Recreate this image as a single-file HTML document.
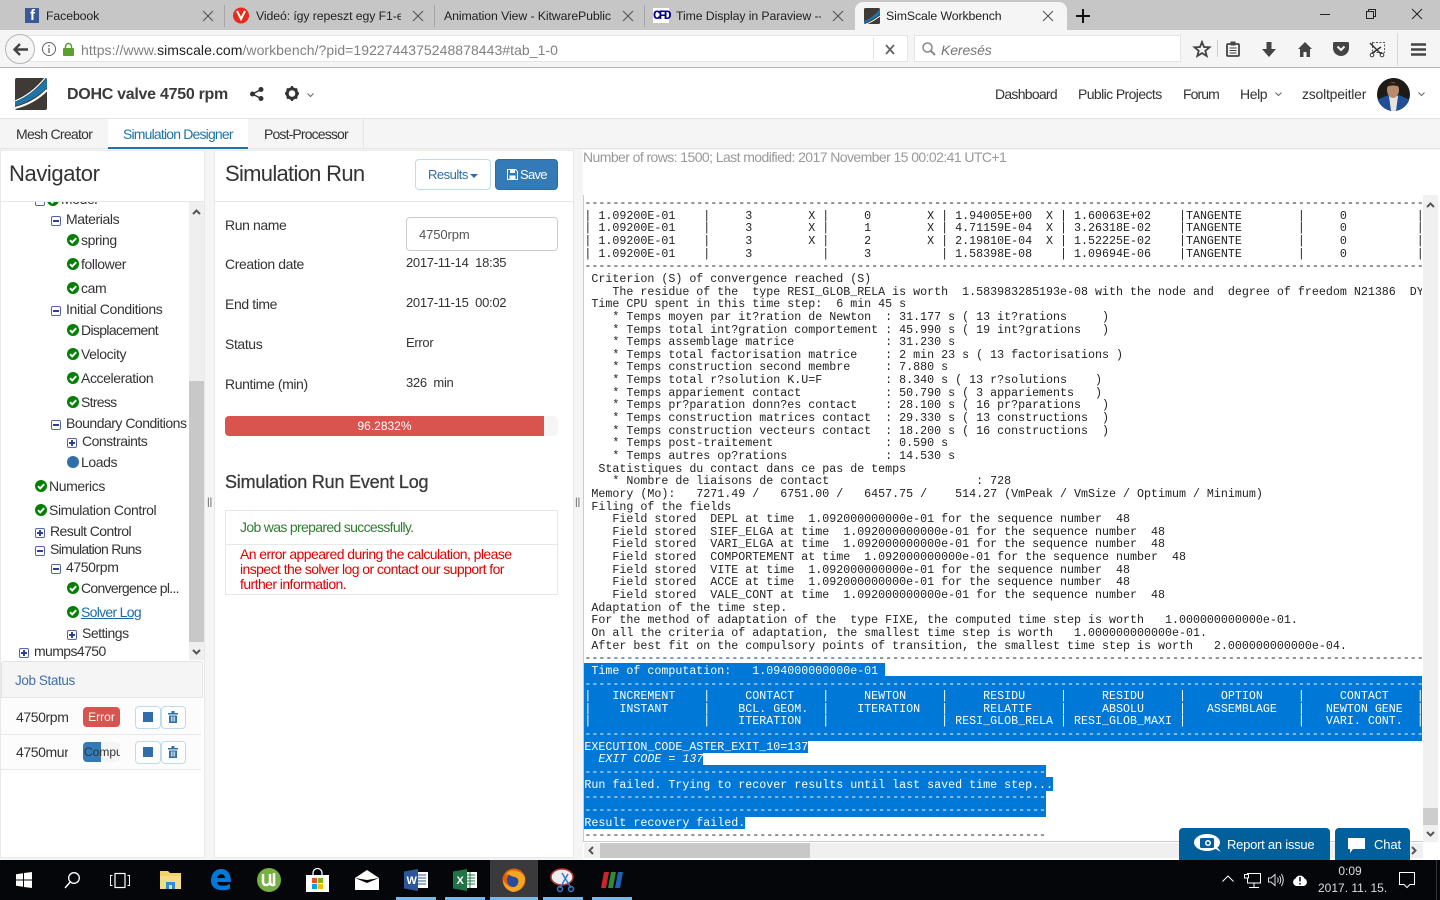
<!DOCTYPE html>
<html><head><meta charset="utf-8"><title>SimScale Workbench</title>
<style>
html,body{margin:0;padding:0;width:1440px;height:900px;overflow:hidden;background:#f5f5f5}
body{position:relative;font-family:"Liberation Sans",sans-serif;font-size:14px;color:#333;letter-spacing:-.4px}
.a{position:absolute;white-space:nowrap;line-height:20px}
.b{position:absolute}
svg{position:absolute;overflow:visible}
.tab{font-size:12.3px;color:#222;letter-spacing:-.1px}
.t{color:#333}
.v{font-size:13px;letter-spacing:-.3px;color:#333}
.bx{position:absolute;width:8px;height:8px;border:1px solid #5563a8;border-radius:2px;background:#fff}
.bx:before{content:"";position:absolute;left:1px;top:3px;width:6px;height:2px;background:#2f3f9a}
.bx.p:after{content:"";position:absolute;left:3px;top:1px;width:2px;height:6px;background:#2f3f9a}
pre{position:absolute;left:.4px;top:2.17px;margin:0;font-family:"Liberation Mono",monospace;font-size:11.67px;line-height:12.64px;letter-spacing:0;color:#222}
pre span{color:#fff}
.sel{position:absolute;left:0;background:#0078d7}
.ul{position:absolute;top:897px;height:3px;background:#76b9ed}
</style></head><body>

<svg width="0" height="0" style="position:absolute"><defs>
<g id="ck"><circle cx="6" cy="6" r="6" fill="#008000"/><path d="M3 6.2 5.2 8.4 9.2 4.2" fill="none" stroke="#fff" stroke-width="2"/></g>
<g id="xx"><path d="M0 0 10 10M10 0 0 10" stroke="#555" stroke-width="1.1" fill="none"/></g>
<g id="trash"><path d="M0 2h10v1.5H0zM3.5 0h3v2h-3zM1 4.5h8V12H1z" fill="#2f6ea8"/><path d="M3.3 5.5v5M5 5.5v5M6.7 5.5v5" stroke="#fff" stroke-width=".8"/></g>
</defs></svg>

<!-- tab strip -->
<div class="b" style="left:0;top:0;width:1440px;height:30px;background:#c6c6c6"></div>
<div class="b" style="left:224px;top:5px;width:1px;height:22px;background:#a5a5a5"></div>
<div class="b" style="left:434px;top:5px;width:1px;height:22px;background:#a5a5a5"></div>
<div class="b" style="left:644px;top:5px;width:1px;height:22px;background:#a5a5a5"></div>
<div class="b" style="left:855px;top:2px;width:212px;height:28px;background:#f5f5f5;border-radius:8px 8px 0 0"></div>

<div class="b" style="left:25px;top:8px;width:14px;height:15px;background:#3b5998"></div>
<div class="a" style="left:30px;top:6px;color:#fff;font:bold 15px/20px 'Liberation Sans',sans-serif">f</div>
<div class="a tab" style="left:46px;top:6px">Facebook</div>
<svg style="left:203px;top:11px" width="10" height="10"><use href="#xx"/></svg>

<svg style="left:233px;top:7px" width="16" height="17"><circle cx="8" cy="8.5" r="8" fill="#e8291c"/><path d="M4 4 8 12 12 4" fill="none" stroke="#fff" stroke-width="2"/></svg>
<div class="a tab" style="left:256px;top:6px;width:145px;overflow:hidden">Videó: így repeszt egy F1-es a</div>
<svg style="left:413px;top:11px" width="10" height="10"><use href="#xx"/></svg>

<div class="a tab" style="left:444px;top:6px">Animation View - KitwarePublic</div>
<svg style="left:623px;top:11px" width="10" height="10"><use href="#xx"/></svg>

<div class="b" style="left:653px;top:8px;width:16px;height:15px;background:#fff"></div>
<div class="a" style="left:653px;top:6px;font:bold 13px/20px 'Liberation Mono',monospace;color:#00008b;letter-spacing:-2.400px">CFD</div>
<div class="a tab" style="left:676px;top:6px;width:145px;overflow:hidden">Time Display in Paraview -- C</div>
<svg style="left:833px;top:11px" width="10" height="10"><use href="#xx"/></svg>

<svg style="left:864px;top:8px" width="16" height="16"><rect width="16" height="16" rx="1.5" fill="#3f3a36"/><path d="M0 13C6 11 11 7 16 1V6C11 10 6 13 0 15z" fill="#1b75aa"/><path d="M2 16C8 14 12 11 16 8" stroke="#fff" fill="none"/></svg>
<div class="a tab" style="left:886px;top:6px">SimScale Workbench</div>
<svg style="left:1043px;top:11px" width="10" height="10"><use href="#xx"/></svg>
<svg style="left:1076px;top:9px" width="14" height="14"><path d="M7 0V14M0 7H14" stroke="#111" stroke-width="2"/></svg>

<svg style="left:1320px;top:14px" width="10" height="1"><path d="M0 .5H10" stroke="#222"/></svg>
<svg style="left:1366px;top:9px" width="10" height="10"><path d="M2.5 2.5V.5H9.5V7.5H7.5M.5 2.5H7.5V9.5H.5z" fill="none" stroke="#222"/></svg>
<svg style="left:1412px;top:9px" width="10" height="10"><path d="M0 0 10 10M10 0 0 10" stroke="#222" stroke-width="1"/></svg>

<!-- toolbar -->
<div class="b" style="left:0;top:30px;width:1440px;height:38px;background:#f5f5f5;border-bottom:1px solid #b5b5b5;box-sizing:border-box"></div>
<div class="b" style="left:20px;top:35px;width:888px;height:27px;background:#fff;border:1px solid #e4e4e4;box-sizing:border-box"></div>
<div class="b" style="left:5px;top:34px;width:30px;height:30px;border-radius:50%;background:#f5f5f5;border:1px solid #b5b5b5;box-sizing:border-box"></div>
<svg style="left:13px;top:43px" width="15" height="13"><path d="M7 1 1.5 6.5 7 12M2 6.500H15" fill="none" stroke="#444" stroke-width="2.400"/></svg>
<svg style="left:42px;top:42px" width="14" height="14"><circle cx="7" cy="7" r="6.500" fill="none" stroke="#666"/><path d="M7 6V11M7 3V4.800" stroke="#666" stroke-width="1.300"/></svg>
<svg style="left:63px;top:43px" width="11" height="13"><rect y="5" width="11" height="8" rx="1" fill="#5aa02c"/><path d="M2.500 6V3.500a3 3 0 0 1 6 0V6" fill="none" stroke="#5aa02c" stroke-width="1.500"/></svg>
<div class="a" style="left:81px;top:40px;color:#808080;letter-spacing:.05px">https://www.<span style="color:#222">simscale.com</span>/workbench/?pid=1922744375248878443#tab_1-0</div>
<div class="b" style="left:873px;top:38px;width:1px;height:21px;background:#e2e2e2"></div>
<svg style="left:886px;top:45px" width="8" height="9"><path d="M0 0 8 9M8 0 0 9" stroke="#666" stroke-width="1.800"/></svg>
<div class="b" style="left:914px;top:35px;width:267px;height:27px;background:#fff;border:1px solid #e4e4e4;box-sizing:border-box"></div>
<svg style="left:922px;top:42px" width="14" height="14"><circle cx="5.500" cy="5.500" r="4.500" fill="none" stroke="#888" stroke-width="1.500"/><path d="M9 9 13 13" stroke="#888" stroke-width="2"/></svg>
<div class="a" style="left:941px;top:40px;font-style:italic;color:#777;letter-spacing:-.1px">Keresés</div>

<svg style="left:1194px;top:41px" width="16" height="16"><path d="M8 1 10 6 15.500 6.300 11.300 9.800 12.700 15 8 12.100 3.300 15 4.700 9.800 .5 6.300 6 6z" fill="none" stroke="#444" stroke-width="1.800"/></svg>
<div class="b" style="left:1217px;top:40px;width:1px;height:17px;background:#ccc"></div>
<svg style="left:1226px;top:42px" width="14" height="15"><rect x="1" y="2" width="12" height="12" rx="1" fill="none" stroke="#444" stroke-width="1.800"/><path d="M5 0H9V3H5zM3.500 6H10.500M3.500 8.500H10.500M3.500 11H10.500" fill="#444" stroke="#444"/></svg>
<svg style="left:1262px;top:42px" width="14" height="15"><path d="M4.500 0H9.500V7H14L7 15 0 7H4.500z" fill="#444"/></svg>
<svg style="left:1298px;top:42px" width="14" height="15"><path d="M7 0 14 7H12V15H8.500V10H5.500V15H2V7H0z" fill="#444"/></svg>
<svg style="left:1333px;top:42px" width="16" height="14"><path d="M1.500 0H14.500Q16 0 16 1.500V6A8 8 0 0 1 0 6V1.500Q0 0 1.500 0z" fill="#444"/><path d="M4.500 4.500 8 8 11.500 4.500" fill="none" stroke="#f5f5f5" stroke-width="2"/></svg>
<svg style="left:1369px;top:42px" width="16" height="15"><rect x="3.500" y=".5" width="12" height="10" fill="none" stroke="#555" stroke-dasharray="2 1.500"/><path d="M1 1 12 12M12 5 2 12" stroke="#333" stroke-width="1.500"/><circle cx="3" cy="13" r="1.800" fill="#fff" stroke="#333"/><circle cx="13" cy="13" r="1.800" fill="#fff" stroke="#333"/></svg>
<div class="b" style="left:1397px;top:33px;width:1px;height:33px;background:#d8d8d8"></div>
<svg style="left:1411px;top:43px" width="15" height="13"><path d="M0 1.500H15M0 6.500H15M0 11.500H15" stroke="#444" stroke-width="2.600"/></svg>

<!-- app header -->
<div class="b" style="left:0;top:68px;width:1440px;height:51px;background:#fff;border-bottom:1px solid #e4e4e4;box-sizing:border-box"></div>
<svg style="left:15px;top:78px" width="32" height="32"><rect width="32" height="32" rx="2" fill="#3f3a36"/><path d="M0 24C10 20 22 12 32 0V10C22 19 11 25 0 28z" fill="#1b75aa"/><path d="M0 30C12 27 22 22 32 12" fill="none" stroke="#fff" stroke-width="2"/><path d="M0 23C10 19 21 11 30 0" fill="none" stroke="#fff" stroke-width="1.200"/></svg>
<div class="a" style="left:67px;top:85px;font-size:16px;font-weight:bold;color:#3a3a3a;letter-spacing:-.28px">DOHC valve 4750 rpm</div>
<svg style="left:250px;top:87px" width="14" height="14"><circle cx="2.500" cy="7" r="2.500" fill="#333"/><circle cx="11" cy="2.500" r="2.500" fill="#333"/><circle cx="11" cy="11.500" r="2.500" fill="#333"/><path d="M2.500 7 11 2.500M2.500 7 11 11.500" stroke="#333" stroke-width="1.500"/></svg>
<svg style="left:285px;top:86px" width="14" height="15"><circle cx="7" cy="7.500" r="4.800" fill="none" stroke="#333" stroke-width="3"/><path d="M7 0V3M7 12V15M0 7.500H3M11 7.500H14M2 2.500 4 4.500M10 10.500 12 12.500M12 2.500 10 4.500M4 10.500 2 12.500" stroke="#333" stroke-width="2.200"/></svg>
<svg style="left:307px;top:93px" width="7" height="5"><path d="M.5 .5 3.500 3.500 6.500 .5" fill="none" stroke="#666"/></svg>
<div class="a t" style="left:995px;top:84px;letter-spacing:-.73px">Dashboard</div>
<div class="a t" style="left:1078px;top:84px;letter-spacing:-.6px">Public Projects</div>
<div class="a t" style="left:1183px;top:84px;letter-spacing:-.9px">Forum</div>
<div class="a t" style="left:1240px;top:84px">Help</div>
<svg style="left:1275px;top:92px" width="7" height="5"><path d="M.5 .5 3.500 3.500 6.500 .5" fill="none" stroke="#666"/></svg>
<div class="a t" style="left:1302px;top:84px;letter-spacing:-.23px">zsoltpeitler</div>
<svg style="left:1377px;top:78px" width="33" height="33"><defs><clipPath id="av"><ellipse cx="16.500" cy="16.500" rx="16.500" ry="16.500"/></clipPath></defs><g clip-path="url(#av)"><rect width="33" height="33" fill="#1e1a16"/><path d="M0 33V22L11 17H22L33 22V33z" fill="#1f4f96"/><path d="M12 18H21L19 33H14z" fill="#e5e5e0"/><ellipse cx="16" cy="12" rx="6" ry="8" fill="#b98a6c"/><path d="M9 9C11 3 21 3 23 9 18 7 14 7 9 9z" fill="#2b2018"/></g></svg>
<svg style="left:1418px;top:92px" width="7" height="5"><path d="M.5 .5 3.500 3.500 6.500 .5" fill="none" stroke="#666"/></svg>

<!-- sub tabs -->
<div class="b" style="left:0;top:119px;width:1440px;height:30px;background:#f5f5f5;border-bottom:1px solid #e4e4e4;box-sizing:border-box"></div>
<div class="b" style="left:108px;top:119px;width:140px;height:28px;background:#fff"></div>
<div class="b" style="left:108px;top:147px;width:140px;height:2px;background:#1b75aa"></div>
<div class="b" style="left:363px;top:119px;width:1px;height:30px;background:#e4e4e4"></div>
<div class="a" style="left:16px;top:124px;letter-spacing:-.72px">Mesh Creator</div>
<div class="a" style="left:123px;top:124px;color:#1b75aa;letter-spacing:-.82px">Simulation Designer</div>
<div class="a" style="left:264px;top:124px;letter-spacing:-.85px">Post-Processor</div>

<!-- navigator -->
<div class="b" style="left:0;top:150px;width:205px;height:708px;background:#fff;border:1px solid #e8e8e8;box-sizing:border-box"></div>
<div class="a" style="left:9px;top:162px;font-size:22px;line-height:24px;color:#333">Navigator</div>
<div class="b" style="left:1px;top:201px;width:203px;height:1px;background:#e8e8e8"></div>
<div class="b" style="left:189px;top:202px;width:15px;height:458px;background:#efefef"></div>
<div class="b" style="left:189px;top:381px;width:15px;height:261px;background:#c8c8c8"></div>
<svg style="left:192px;top:209px" width="9" height="6"><path d="M1 5 4.500 1.500 8 5" fill="none" stroke="#555" stroke-width="2"/></svg>
<svg style="left:192px;top:649px" width="9" height="6"><path d="M1 1 4.500 4.500 8 1" fill="none" stroke="#555" stroke-width="2"/></svg>

<div class="b" style="left:1px;top:202px;width:187px;height:460px;overflow:hidden">
<div class="bx" style="left:34px;top:-6px"></div>
<svg style="left:46px;top:-8px" width="12" height="12"><use href="#ck"/></svg>
<div class="a" style="left:60px;top:-13px">Model</div>
</div>

<div class="bx" style="left:51px;top:216px"></div><div class="a" style="left:66px;top:209px">Materials</div>
<svg style="left:67px;top:234px" width="12" height="12"><use href="#ck"/></svg><div class="a" style="left:81px;top:230px">spring</div>
<svg style="left:67px;top:258px" width="12" height="12"><use href="#ck"/></svg><div class="a" style="left:81px;top:254px">follower</div>
<svg style="left:67px;top:282px" width="12" height="12"><use href="#ck"/></svg><div class="a" style="left:81px;top:278px">cam</div>
<div class="bx" style="left:51px;top:306px"></div><div class="a" style="left:66px;top:299px;letter-spacing:-.35px">Initial Conditions</div>
<svg style="left:67px;top:324px" width="12" height="12"><use href="#ck"/></svg><div class="a" style="left:81px;top:320px;letter-spacing:-.65px">Displacement</div>
<svg style="left:67px;top:348px" width="12" height="12"><use href="#ck"/></svg><div class="a" style="left:81px;top:344px">Velocity</div>
<svg style="left:67px;top:372px" width="12" height="12"><use href="#ck"/></svg><div class="a" style="left:81px;top:368px">Acceleration</div>
<svg style="left:67px;top:396px" width="12" height="12"><use href="#ck"/></svg><div class="a" style="left:81px;top:392px;letter-spacing:-.7px">Stress</div>
<div class="bx" style="left:51px;top:420px"></div><div class="a" style="left:66px;top:413px;letter-spacing:-.5px">Boundary Conditions</div>
<div class="bx p" style="left:67px;top:438px"></div><div class="a" style="left:82px;top:431px;letter-spacing:-.5px">Constraints</div>
<div class="b" style="left:67px;top:456px;width:12px;height:12px;border-radius:50%;background:#2f6ea8"></div><div class="a" style="left:81px;top:452px">Loads</div>
<svg style="left:35px;top:480px" width="12" height="12"><use href="#ck"/></svg><div class="a" style="left:49px;top:476px">Numerics</div>
<svg style="left:35px;top:504px" width="12" height="12"><use href="#ck"/></svg><div class="a" style="left:49px;top:500px">Simulation Control</div>
<div class="bx p" style="left:35px;top:528px"></div><div class="a" style="left:50px;top:521px;letter-spacing:-.55px">Result Control</div>
<div class="bx" style="left:35px;top:546px"></div><div class="a" style="left:50px;top:539px;letter-spacing:-.73px">Simulation Runs</div>
<div class="bx" style="left:51px;top:564px"></div><div class="a" style="left:66px;top:557px">4750rpm</div>
<svg style="left:67px;top:582px" width="12" height="12"><use href="#ck"/></svg><div class="a" style="left:81px;top:578px;letter-spacing:-.7px">Convergence pl...</div>
<svg style="left:67px;top:606px" width="12" height="12"><use href="#ck"/></svg><div class="a" style="left:81px;top:602px;color:#1b6ca8;text-decoration:underline;letter-spacing:-.7px">Solver Log</div>
<div class="bx p" style="left:67px;top:630px"></div><div class="a" style="left:82px;top:623px;letter-spacing:-.5px">Settings</div>
<div class="bx p" style="left:19px;top:648px"></div><div class="a" style="left:34px;top:641px;letter-spacing:-.6px">mumps4750</div>

<!-- job status -->
<div class="b" style="left:1px;top:661px;width:202px;height:37px;background:#f5f5f5;border:1px solid #e4e4e4;border-radius:3px 3px 0 0;box-sizing:border-box"></div>
<div class="a" style="left:15px;top:671px;color:#3f6fa8;font-size:13.500px">Job Status</div>
<div class="b" style="left:1px;top:699px;width:200px;height:35px;background:#fcfcfc;border-bottom:1px solid #e8e8e8"></div>
<div class="b" style="left:1px;top:735px;width:200px;height:34px;background:#fcfcfc;border-bottom:1px solid #e8e8e8"></div>
<div class="a" style="left:16px;top:707px">4750rpm</div>
<div class="a" style="left:16px;top:742px;width:52px;overflow:hidden">4750mur</div>
<div class="a" style="left:83px;top:707px;width:37px;height:20px;background:#d9534f;border-radius:4px;color:#fff;font-size:12px;text-align:center;letter-spacing:0">Error</div>
<div class="b" style="left:83px;top:742px;width:37px;height:20px;background:#f5f5f5;border-radius:4px;overflow:hidden"><div class="b" style="left:0;top:0;width:18px;height:20px;background:#337ab7"></div><div class="a" style="left:1px;top:0;font-size:12px;color:#333;letter-spacing:0">Computing</div></div>
<div class="b" style="left:135px;top:706px;width:26px;height:23px;border:1px solid #bcdcec;border-radius:4px;box-sizing:border-box;background:#fff"></div>
<div class="b" style="left:161px;top:706px;width:25px;height:23px;border:1px solid #bcdcec;border-radius:4px;box-sizing:border-box;background:#fff"></div>
<div class="b" style="left:143px;top:712px;width:10px;height:10px;background:#2f6ea8"></div>
<svg style="left:168px;top:711px" width="10" height="12"><use href="#trash"/></svg>
<div class="b" style="left:135px;top:741px;width:26px;height:23px;border:1px solid #bcdcec;border-radius:4px;box-sizing:border-box;background:#fff"></div>
<div class="b" style="left:161px;top:741px;width:25px;height:23px;border:1px solid #bcdcec;border-radius:4px;box-sizing:border-box;background:#fff"></div>
<div class="b" style="left:143px;top:747px;width:10px;height:10px;background:#2f6ea8"></div>
<svg style="left:168px;top:746px" width="10" height="12"><use href="#trash"/></svg>

<div class="a" style="left:207px;top:493px;font-size:10px;color:#555;letter-spacing:0">||</div>
<div class="a" style="left:575px;top:493px;font-size:10px;color:#555;letter-spacing:0">||</div>

<!-- middle panel -->
<div class="b" style="left:214px;top:150px;width:360px;height:708px;background:#fff;border:1px solid #e8e8e8;box-sizing:border-box"></div>
<div class="a" style="left:225px;top:162px;font-size:22px;line-height:24px;color:#333;letter-spacing:-.7px">Simulation Run</div>
<div class="b" style="left:215px;top:201px;width:358px;height:1px;background:#e8e8e8"></div>
<div class="b" style="left:415px;top:159px;width:76px;height:31px;border:1px solid #bcdcec;border-radius:4px;box-sizing:border-box;background:#fff"></div>
<div class="a" style="left:428px;top:165px;font-size:13px;color:#2f6ea8;letter-spacing:-.5px">Results</div>
<svg style="left:470px;top:174px" width="8" height="4"><path d="M0 0H8L4 4z" fill="#2f6ea8"/></svg>
<div class="b" style="left:495px;top:159px;width:63px;height:31px;background:#337ab7;border-radius:4px;border:1px solid #2e6da4;box-sizing:border-box"></div>
<svg style="left:507px;top:169px" width="11" height="11"><path d="M.5 .5H8.500L10.500 2.500V10.500H.5z" fill="none" stroke="#fff"/><path d="M3 .5H8V4H3zM2.500 6.500H8.500V10.500H2.500z" fill="#fff"/></svg>
<div class="a" style="left:520px;top:165px;font-size:13px;color:#fff;letter-spacing:-.7px">Save</div>

<div class="a" style="left:225px;top:215px">Run name</div>
<div class="b" style="left:406px;top:217px;width:152px;height:34px;background:#fff;border:1px solid #ccc;border-radius:4px;box-sizing:border-box"></div>
<div class="a" style="left:419px;top:225px;color:#555;letter-spacing:-.1px;font-size:13px">4750rpm</div>
<div class="a" style="left:225px;top:254px">Creation date</div>
<div class="a v" style="left:406px;top:253px">2017-11-14&nbsp; 18:35</div>
<div class="a" style="left:225px;top:294px">End time</div>
<div class="a v" style="left:406px;top:293px">2017-11-15&nbsp; 00:02</div>
<div class="a" style="left:225px;top:334px">Status</div>
<div class="a v" style="left:406px;top:333px">Error</div>
<div class="a" style="left:225px;top:374px">Runtime (min)</div>
<div class="a v" style="left:406px;top:373px">326&nbsp; min</div>

<div class="b" style="left:225px;top:416px;width:333px;height:20px;background:#f5f5f5;border-radius:4px;overflow:hidden"><div class="b" style="left:0;top:0;width:319px;height:20px;background:#d9534f"></div></div>
<div class="a" style="left:225px;top:416px;width:319px;text-align:center;color:#fff;font-size:12px;letter-spacing:0">96.2832%</div>

<div class="a" style="left:225px;top:472px;font-size:18px;color:#3a3a3a;letter-spacing:-.2px;-webkit-text-stroke:.3px #3a3a3a">Simulation Run Event Log</div>
<div class="b" style="left:225px;top:510px;width:333px;height:85px;border:1px solid #e8e8e8;box-sizing:border-box"></div>
<div class="b" style="left:225px;top:544px;width:333px;height:1px;background:#e8e8e8"></div>
<div class="a" style="left:240px;top:517px;color:#2f7d32;letter-spacing:-.67px">Job was prepared successfully.</div>
<div class="a" style="left:240px;top:547px;color:#e00000;line-height:15px;letter-spacing:-.57px">An error appeared during the calculation, please<br>inspect the solver log or contact our support for<br>further information.</div>

<!-- right panel -->
<div class="b" style="left:583px;top:150px;width:857px;height:710px;background:#fff"></div>
<div class="a" style="left:583px;top:147px;color:#999;letter-spacing:-.58px">Number of rows: 1500; Last modified: 2017 November 15 00:02:41 UTC+1</div>
<div class="b" style="left:583px;top:195px;width:1px;height:647px;background:#ccc"></div>

<div class="b" style="left:584px;top:195px;width:838px;height:646px;overflow:hidden;background:#fff">
<div class="sel" style="top:468px;height:13px;width:301px"></div>
<div class="sel" style="top:481px;height:65px;width:838px"></div>
<div class="sel" style="top:546px;height:12px;width:224px"></div>
<div class="sel" style="top:558px;height:12px;width:119px"></div>
<div class="sel" style="top:570px;height:12px;width:462px"></div>
<div class="sel" style="top:582px;height:14px;width:469px"></div>
<div class="sel" style="top:596px;height:26px;width:462px"></div>
<div class="sel" style="top:622px;height:12px;width:161px"></div>
<pre>------------------------------------------------------------------------------------------------------------------------
| 1.09200E-01    |     3        X |     0        X | 1.94005E+00  X | 1.60063E+02    |TANGENTE        |     0          |
| 1.09200E-01    |     3        X |     1        X | 4.71159E-04  X | 3.26318E-02    |TANGENTE        |     0          |
| 1.09200E-01    |     3        X |     2        X | 2.19810E-04  X | 1.52225E-02    |TANGENTE        |     0          |
| 1.09200E-01    |     3          |     3          | 1.58398E-08    | 1.09694E-06    |TANGENTE        |     0          |
------------------------------------------------------------------------------------------------------------------------
 Criterion (S) of convergence reached (S)
    The residue of the  type RESI_GLOB_RELA is worth  1.583983285193e-08 with the node and  degree of freedom N21386  DY
 Time CPU spent in this time step:  6 min 45 s
    * Temps moyen par it?ration de Newton  : 31.177 s ( 13 it?rations     )
    * Temps total int?gration comportement : 45.990 s ( 19 int?grations   )
    * Temps assemblage matrice             : 31.230 s
    * Temps total factorisation matrice    : 2 min 23 s ( 13 factorisations )
    * Temps construction second membre     : 7.880 s
    * Temps total r?solution K.U=F         : 8.340 s ( 13 r?solutions    )
    * Temps appariement contact            : 50.790 s ( 3 appariements   )
    * Temps pr?paration donn?es contact    : 28.100 s ( 16 pr?parations   )
    * Temps construction matrices contact  : 29.330 s ( 13 constructions  )
    * Temps construction vecteurs contact  : 18.200 s ( 16 constructions  )
    * Temps post-traitement                : 0.590 s
    * Temps autres op?rations              : 14.530 s
  Statistiques du contact dans ce pas de temps
    * Nombre de liaisons de contact                     : 728
 Memory (Mo):   7271.49 /   6751.00 /   6457.75 /    514.27 (VmPeak / VmSize / Optimum / Minimum)
 Filing of the fields
    Field stored  DEPL at time  1.092000000000e-01 for the sequence number  48
    Field stored  SIEF_ELGA at time  1.092000000000e-01 for the sequence number  48
    Field stored  VARI_ELGA at time  1.092000000000e-01 for the sequence number  48
    Field stored  COMPORTEMENT at time  1.092000000000e-01 for the sequence number  48
    Field stored  VITE at time  1.092000000000e-01 for the sequence number  48
    Field stored  ACCE at time  1.092000000000e-01 for the sequence number  48
    Field stored  VALE_CONT at time  1.092000000000e-01 for the sequence number  48
 Adaptation of the time step.
 For the method of adaptation of the  type FIXE, the computed time step is worth   1.000000000000e-01.
 On all the criteria of adaptation, the smallest time step is worth   1.000000000000e-01.
 After best fit on the compulsory points of transition, the smallest time step is worth   2.000000000000e-04.
------------------------------------------------------------------------------------------------------------------------
<span> Time of computation:   1.094000000000e-01</span>
<span>------------------------------------------------------------------------------------------------------------------------</span>
<span>|   INCREMENT    |     CONTACT    |     NEWTON     |     RESIDU     |     RESIDU     |     OPTION     |     CONTACT    |</span>
<span>|    INSTANT     |    BCL. GEOM.  |    ITERATION   |     RELATIF    |     ABSOLU     |   ASSEMBLAGE   |   NEWTON GENE  |</span>
<span>|                |    ITERATION   |                | RESI_GLOB_RELA | RESI_GLOB_MAXI |                |   VARI. CONT.  |</span>
<span>------------------------------------------------------------------------------------------------------------------------</span>
<span>EXECUTION_CODE_ASTER_EXIT_10=137</span>
<span style="font-style:italic">  EXIT CODE = 137</span>
<span>------------------------------------------------------------------</span>
<span>Run failed. Trying to recover results until last saved time step...</span>
<span>------------------------------------------------------------------</span>
<span>------------------------------------------------------------------</span>
<span>Result recovery failed.</span>
------------------------------------------------------------------</pre>
</div>

<!-- log scrollbars -->
<div class="b" style="left:1423px;top:195px;width:15px;height:647px;background:#f0f0f0"></div>
<div class="b" style="left:1423px;top:808px;width:15px;height:17px;background:#cdcdcd"></div>
<svg style="left:1426px;top:202px" width="9" height="6"><path d="M1 5 4.500 1.500 8 5" fill="none" stroke="#555" stroke-width="2"/></svg>
<svg style="left:1426px;top:831px" width="9" height="6"><path d="M1 1 4.500 4.500 8 1" fill="none" stroke="#555" stroke-width="2"/></svg>
<div class="b" style="left:583px;top:841px;width:840px;height:1px;background:#ccc"></div>
<div class="b" style="left:584px;top:843px;width:839px;height:15px;background:#f0f0f0"></div>
<div class="b" style="left:600px;top:843px;width:210px;height:15px;background:#c8c8c8"></div>
<svg style="left:588px;top:846px" width="6" height="9"><path d="M5 1 1.500 4.500 5 8" fill="none" stroke="#555" stroke-width="2"/></svg>
<svg style="left:1411px;top:846px" width="6" height="9"><path d="M1 1 4.500 4.500 1 8" fill="none" stroke="#555" stroke-width="2"/></svg>

<!-- bottom buttons -->
<div class="b" style="left:1179px;top:828px;width:151px;height:32px;background:#01609b;border-radius:4px 4px 0 0"></div>
<svg style="left:1194px;top:834px" width="27" height="18"><ellipse cx="13" cy="8.500" rx="13" ry="8.500" fill="#fff"/><path d="M20 14 27 18 22 12z" fill="#fff"/><rect x="6" y="4" width="14" height="10" rx="1.500" fill="#01609b"/><circle cx="14" cy="9" r="3" fill="#fff"/><circle cx="14" cy="9" r="1.500" fill="#01609b"/></svg>
<div class="a" style="left:1227px;top:835px;color:#fff;font-size:13px;letter-spacing:-.25px">Report an issue</div>
<div class="b" style="left:1335px;top:828px;width:75px;height:32px;background:#01609b;border-radius:4px 4px 0 0"></div>
<svg style="left:1348px;top:838px" width="17" height="15"><path d="M0 0H17V11H5L2 15V11H0z" fill="#fff"/></svg>
<div class="a" style="left:1374px;top:835px;color:#fff;font-size:13px;letter-spacing:-.1px">Chat</div>

<!-- taskbar -->
<div class="b" style="left:0;top:860px;width:1440px;height:40px;background:#05060a"></div>
<div class="b" style="left:490px;top:860px;width:48px;height:40px;background:#3a3a3c"></div>
<div class="ul" style="left:396px;width:40px"></div>
<div class="ul" style="left:445px;width:40px"></div>
<div class="ul" style="left:490px;width:48px"></div>
<div class="ul" style="left:543px;width:40px"></div>
<div class="ul" style="left:592px;width:40px"></div>

<svg style="left:16px;top:872px" width="16" height="16"><path d="M0 2.200 7 1.200V7.500H0zM8 1 16 0V7.500H8zM0 8.500H7V14.800L0 13.800zM8 8.500H16V16L8 15z" fill="#fff"/></svg>
<svg style="left:64px;top:872px" width="16" height="17"><circle cx="10" cy="6" r="5.300" fill="none" stroke="#fff" stroke-width="1.300"/><path d="M6.200 10 1 16" stroke="#fff" stroke-width="1.500"/></svg>
<svg style="left:110px;top:873px" width="20" height="15"><path d="M2.500 2.500H.5V12.500H2.500M17.500 2.500H19.500V12.500H17.500" fill="none" stroke="#fff"/><rect x="5" y=".5" width="10" height="14" fill="none" stroke="#fff" stroke-width="1.200"/></svg>
<svg style="left:160px;top:871px" width="21" height="18"><path d="M0 0H8L10 2H21V18H0z" fill="#f4d26b"/><rect y="5" width="21" height="13" fill="#f7dc85"/><path d="M6 18V11H15V18H12V14H9V18z" fill="#2a8fd8"/><rect x="6" y="11" width="9" height="3" fill="#2a8fd8"/></svg>
<svg style="left:210px;top:869px" width="21" height="22"><path d="M1 12C1 4 6 0 11 0 17 0 21 4 21 13H7C7 17 14 18 20 15V20C12 23 1 21 1 12zM7 9H15C15 4 8 4 7 9z" fill="#0078d7"/></svg>
<svg style="left:257px;top:868px" width="24" height="24"><circle cx="12" cy="12" r="12" fill="#76b041"/><path d="M6 6V14C6 18 12 18 13 14V6M13 14C13 17 16 18 18 16M17 5V16" fill="none" stroke="#fff" stroke-width="2.500"/></svg>
<svg style="left:306px;top:869px" width="23" height="23"><path d="M7 6V4a4 4 0 0 1 9 0V6" fill="none" stroke="#fff" stroke-width="1.300"/><rect y="6" width="23" height="17" fill="#fff"/><rect x="6" y="9" width="5" height="5" fill="#f25022"/><rect x="12" y="9" width="5" height="5" fill="#7fba00"/><rect x="6" y="15" width="5" height="5" fill="#00a4ef"/><rect x="12" y="15" width="5" height="5" fill="#ffb900"/></svg>
<svg style="left:355px;top:870px" width="24" height="20"><path d="M0 8 12 0 24 8V20H0z" fill="#fff"/><path d="M0 8 12 13 24 8 12 10z" fill="#05060a"/></svg>
<svg style="left:404px;top:869px" width="24" height="22"><rect x="10" y="3" width="14" height="16" fill="#fff"/><path d="M13 6H22M13 9H22M13 12H22M13 15H22" stroke="#2b579a"/><path d="M0 2.500 14 0V22L0 19.500z" fill="#2b579a"/><text x="2.500" y="15" fill="#fff" font-family="Liberation Sans" font-weight="bold" font-size="11" letter-spacing="0">W</text></svg>
<svg style="left:453px;top:869px" width="24" height="22"><rect x="10" y="3" width="14" height="16" fill="#fff"/><path d="M13 6H22M13 9H22M13 12H22M13 15H22M17 3V19" stroke="#217346"/><path d="M0 2.500 14 0V22L0 19.500z" fill="#217346"/><text x="3.500" y="15" fill="#fff" font-family="Liberation Sans" font-weight="bold" font-size="11" letter-spacing="0">X</text></svg>
<svg style="left:502px;top:868px" width="24" height="24"><circle cx="12" cy="12" r="11.500" fill="#e66000"/><circle cx="12" cy="12" r="7" fill="#2a4a9c"/><path d="M4 6C8 0 20 2 23 10 23 18 17 24 11 24 5 23 1 17 1 12 4 17 8 20 12 19 16 18 18 13 15 10 12 8 9 9 8 7 6 6 5 7 4 6z" fill="#f5a623"/></svg>
<svg style="left:550px;top:868px" width="26" height="25"><ellipse cx="12" cy="9" rx="11" ry="8" fill="#eee" stroke="#b33" stroke-width="1.500"/><path d="M12 5 21 20M18 6 10 20" stroke="#3a78c8" stroke-width="1.500"/><circle cx="10" cy="21" r="2.500" fill="none" stroke="#3a78c8" stroke-width="1.500"/><circle cx="21" cy="21" r="2.500" fill="none" stroke="#3a78c8" stroke-width="1.500"/></svg>
<svg style="left:601px;top:872px" width="22" height="16"><path d="M3 0H8L5 16H0z" fill="#c8262c"/><path d="M10 0H15L12 16H7z" fill="#2e8b3a"/><path d="M17 0H22L19 16H14z" fill="#1f5fb4"/></svg>

<svg style="left:1222px;top:875px" width="12" height="7"><path d="M.5 6.500 6 1 11.500 6.500" fill="none" stroke="#fff"/></svg>
<svg style="left:1244px;top:873px" width="17" height="15"><path d="M3.500 .5H16.500V10H3.500zM10 10V14M5 14.500H15" fill="none" stroke="#fff"/><rect x=".5" y="1.500" width="4" height="3.500" fill="#05060a" stroke="#fff"/></svg>
<svg style="left:1268px;top:873px" width="16" height="14"><path d="M.5 5H3L7 1.500V12.500L3 9H.5zM9.500 4.500Q11 7 9.500 9.500M11.500 3Q14 7 11.500 11M13.500 1Q17 7 13.500 13" fill="none" stroke="#ddd"/></svg>
<svg style="left:1292px;top:874px" width="16" height="12"><path d="M4 12A4 4 0 0 1 3.500 4.500 5 5 0 0 1 12.500 4.500 4 4 0 0 1 12 12z" fill="#fff"/><path d="M8 3V7.500M8 9V10.500" stroke="#05060a" stroke-width="1.500"/></svg>
<div class="a" style="left:1319px;top:861px;width:62px;text-align:center;color:#ddd;font-size:12px;letter-spacing:0">0:09</div>
<div class="a" style="left:1318px;top:878px;color:#ddd;font-size:12px;letter-spacing:0">2017. 11. 15.</div>
<svg style="left:1399px;top:872px" width="16" height="16"><path d="M.5 .5H15.500V12.500H11L8 15.500 5 12.500H.5z" fill="none" stroke="#fff"/></svg>
<div class="b" style="left:1436px;top:860px;width:1px;height:40px;background:#333"></div>

</body></html>
